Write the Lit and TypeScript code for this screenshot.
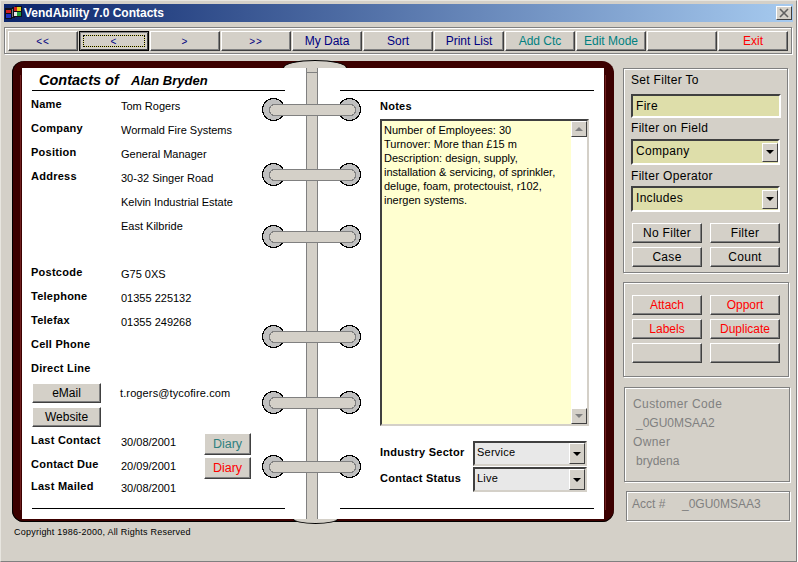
import { LitElement, html, css } from "lit";
import { customElement } from "lit/decorators.js";

const TOOLBAR = [
  { t: "<<", c: "navy small" }, { t: "<", c: "navy small focus" }, { t: ">", c: "navy small" }, { t: ">>", c: "navy small" },
  { t: "My Data", c: "navy" }, { t: "Sort", c: "navy" }, { t: "Print List", c: "navy" },
  { t: "Add Ctc", c: "teal" }, { t: "Edit Mode", c: "teal" }, { t: "", c: "" }, { t: "Exit", c: "red" },
];
const FIELDS = [
  ["Name", "Tom Rogers"], ["Company", "Wormald Fire Systems"], ["Position", "General Manager"],
  ["Address", "30-32 Singer Road"], ["", "Kelvin Industrial Estate"], ["", "East Kilbride"], ["", ""],
  ["Postcode", "G75 0XS"], ["Telephone", "01355 225132"], ["Telefax", "01355 249268"],
  ["Cell Phone", ""], ["Direct Line", ""],
];
const DATES = [["Last Contact", "30/08/2001"], ["Contact Due", "20/09/2001"], ["Last Mailed", "30/08/2001"]];
const RINGS = [110, 175, 237, 337, 403, 467];

@customElement("app-root")
export class AppRoot extends LitElement {
  static styles = css`
    :host { display: block; width: 798px; height: 562px; overflow: hidden; }
    * { box-sizing: border-box; }
    .window {
      position: relative; width: 797px; height: 562px; background: #d4d0c8;
      border: 1px solid; border-color: #e8e6e0 #808080 #808080 #e8e6e0;
      font-family: "Liberation Sans", Arial, sans-serif; font-size: 12px; color: #000;
    }
    .title {
      display: flex; align-items: center; justify-content: space-between;
      height: 18px; margin: 3px 3px 0 3px; padding: 0 1px 0 0;
      background: linear-gradient(90deg, #0a246a, #a6caef); color: #fff;
      font-weight: bold; font-size: 12px;
    }
    .title-left { display: flex; align-items: center; gap: 1px; }
    .close {
      width: 16px; height: 14px; background: #d4d0c8; display: flex; align-items: center; justify-content: center;
      border: 1px solid; border-color: #fff #404040 #404040 #fff;
    }
    .toolbar {
      display: flex; height: 27px; margin: 5px 4px 0 3px; padding: 3px 3px 0 3px;
      border: 1px solid #808080; box-shadow: inset 1px 1px 0 #fff, 1px 1px 0 #fff; gap: 1px;
    }
    .btn {
      display: flex; align-items: center; justify-content: center; background: #d4d0c8;
      border: 1px solid; border-color: #fff #404040 #404040 #fff;
      box-shadow: inset -1px -1px 0 #808080; color: #000; white-space: nowrap;
    }
    .toolbar .btn { width: 70px; height: 20px; }
    .navy { color: #000080; }
    .teal { color: #008080; }
    .red { color: #ff0000; }
    .dim-teal { color: #2f8080; }
    .small { font-size: 10px; letter-spacing: 1px; }
    .toolbar .focus { position: relative; border: 1px solid #000; box-shadow: inset 1px 1px 0 #808080, inset -1px -1px 0 #404040; }
    .focus::after { content: ""; position: absolute; inset: 3px; border: 1px dotted #000; background: transparent; }
    .focus::before { content: ""; position: absolute; inset: 3px; border: 1px solid #e6e070; }

    .main { display: grid; grid-template-columns: 613px 1fr; margin-top: 7px; }
    .binder-col { padding-left: 11px; }
    .binder {
      position: relative; display: flex; width: 602px; height: 461px; padding: 7px 10px 3px 10px;
      background: #3c0000; border-radius: 12px; box-shadow: inset 0 -1px 0 #000, inset 1px 0 0 #000;
    }
    .binder::before {
      content: ""; position: absolute; left: 8px; right: 8px; top: 14px; bottom: 12px;
      border: solid #702020; border-width: 0 1px;
    }
    .page { position: relative; display: flex; flex-direction: column; background: #fff; height: 451px; }
    .page.left { width: 285px; padding: 0 21px 0 10px; border-right: 1px solid #808080; }
    .page.right { width: 287px; padding: 0 10px 0 22px; border-left: 1px solid #808080; }
    .spine { width: 10px; background: #d4d0c8; padding-top: 4px; }
    .spine-mark { height: 1px; background: #808080; }
    .heading { display: flex; align-items: baseline; height: 23px; padding: 4px 0 0 7px; border-bottom: 1px solid #000; font-style: italic; font-weight: bold; }
    .heading .of { font-size: 14.5px; width: 92px; }
    .heading .who { font-size: 13px; }
    .head-blank { height: 23px; border-bottom: 1px solid #000; }
    .fields { margin-top: 1px; }
    .row { display: grid; grid-template-columns: 89px 1fr; height: 24px; align-items: center; }
    .lab { font-weight: bold; font-size: 11px; letter-spacing: 0.25px; margin-left: -1px; white-space: nowrap; }
    .val { font-size: 11px; padding-top: 4px; white-space: nowrap; }
    .mail { display: grid; grid-template-columns: 88px 1fr; margin-top: 3px; }
    .mail-btns { display: flex; flex-direction: column; gap: 4px; }
    .mail-btns .btn { width: 69px; height: 20px; }
    .mail .val { padding: 0; margin-top: 4px; letter-spacing: 0.12px; }
    .dates { display: flex; margin-top: 1px; }
    .date-rows { width: 172px; }
    .date-rows .row:last-child { height: 20px; }
    .diaries { display: flex; flex-direction: column; gap: 2px; padding-top: 5px; }
    .diaries .btn { width: 47px; height: 22px; font-size: 12.5px; }
    .rule { margin-top: auto; margin-bottom: 10px; height: 1px; background: #000; flex: none; }
    .right-body { padding-left: 40px; }
    .notes-lab { font-weight: bold; font-size: 11px; letter-spacing: 0.25px; height: 28px; padding-top: 9px; }
    .notes {
      position: relative; width: 209px; height: 307px; background: #ffffd0;
      border: 2px solid; border-color: #404040 #d4d0c8 #d4d0c8 #404040;
      padding: 2px 20px 0 2px; font-size: 11px; line-height: 14px;
    }
    .scroll { position: absolute; right: 0; top: 0; bottom: 0; width: 16px; background: #fff; display: flex; flex-direction: column; justify-content: space-between; }
    .sb { height: 16px; display: flex; align-items: center; justify-content: center; background: #d4d0c8; border: 1px solid; border-color: #fff #404040 #404040 #fff; }
    .tri-up { width: 0; height: 0; border: 4px solid transparent; border-top: 0; border-bottom: 4px solid #808080; }
    .tri-dn { width: 0; height: 0; border: 4px solid transparent; border-bottom: 0; border-top: 4px solid #808080; }
    .tri-blk { width: 0; height: 0; border: 4px solid transparent; border-bottom: 0; border-top: 4px solid #000; }
    .sel-rows { margin-top: 15px; display: flex; flex-direction: column; gap: 1px; }
    .sel-row { display: flex; align-items: center; }
    .sel-row .lab { width: 93px; margin: 0; padding-bottom: 4px; }
    .select {
      display: flex; align-items: center; justify-content: space-between; height: 25px; width: 114px;
      background: #e8e8e8; border: 2px solid; border-color: #404040 #d4d0c8 #d4d0c8 #404040; padding-left: 2px; font-size: 11px; letter-spacing: 0.25px;
    }
    .select span { padding-bottom: 4px; }
    .arrow { width: 16px; height: 21px; display: flex; align-items: center; justify-content: center; background: #d4d0c8; border: 1px solid; border-color: #fff #404040 #404040 #fff; }
    .copyright { margin: 5px 0 0 2px; font-size: 9px; letter-spacing: 0.23px; }

    .ring { position: absolute; left: 250px; width: 100px; height: 26px; }
    .arc { position: absolute; background: #d4d0c8; border: 1px solid #000; }
    .arc.top { left: 271px; top: -1px; width: 64px; height: 8px; border-bottom: 0; border-radius: 50% 50% 0 0 / 100% 100% 0 0; }
    .arc.bot { left: 281px; top: 458px; width: 45px; height: 5px; border-top: 0; border-radius: 0 0 50% 50% / 0 0 100% 100%; }

    .side { display: flex; flex-direction: column; padding-top: 7px; }
    .panel { border: 1px solid #808080; box-shadow: inset 1px 1px 0 #fff, 1px 1px 0 #fff; flex: none; }
    .p1 { margin-left: 9px; width: 165px; height: 205px; padding: 3px 7px 0 7px; letter-spacing: 0.3px; }
    .p1 .cap { height: 16px; line-height: 16px; }
    .f-input { width: 150px; height: 24px; margin: 6px 0 0 0; background: #dedeaa; border: 2px solid; border-color: #404040 #fff #fff #404040; padding: 3px 0 0 3px; }
    .f-sel { display: flex; justify-content: space-between; align-items: center; width: 149px; height: 26px; background: #dedeaa; border: 2px solid; border-color: #404040 #fff #fff #404040; padding: 0 0 2px 3px; }
    .p1 .f-sel .arrow { margin-top: 2px; height: 19px; }
    .cap.a { margin: 2px 0 3px; }
    .cap.c { margin: 3px 0 2px; }
    .grid2 { display: grid; grid-template-columns: 70px 70px; gap: 4px 8px; }
    .grid2 .btn { height: 20px; }
    .p1 .grid2 { margin: 11px 0 0 1px; }
    .p2 { margin: 9px 0 0 9px; width: 166px; height: 95px; padding: 12px 0 0 8px; }
    .p3 { margin: 10px 0 0 10px; width: 166px; height: 95px; padding: 7px 0 0 8px; color: #808080; letter-spacing: 0.4px; }
    .p3 div { height: 19px; line-height: 19px; }
    .p3 .ind { padding-left: 3px; letter-spacing: 0; }
    .p4 { margin: 9px 0 0 12px; width: 164px; height: 30px; padding: 5px 0 0 5px; color: #808080; display: flex; }
    .p4 span:first-child { width: 50px; }
  `;

  private ring(y: number) {
    return html`<svg class="ring" style="top:${y - 61 - 13}px" viewBox="0 0 100 26" shape-rendering="crispEdges">
      <circle cx="11.5" cy="12.5" r="11" fill="#c0c0c0" stroke="#000"/>
      <circle cx="87.5" cy="12.5" r="11" fill="#c0c0c0" stroke="#000"/>
      <path d="M13.5 7.5H87.5Q93.5 7.5 93.5 13T87.5 18.5H13.5Q7.5 18.5 7.5 13T13.5 7.5Z" fill="#d4d0c8" stroke="#808080"/>
    </svg>`;
  }

  render() {
    return html`<div class="window">
      <div class="title">
        <div class="title-left">
          <svg width="19" height="18" viewBox="0 0 19 18" shape-rendering="crispEdges">
            <path d="M1 4H8V3H11V2H18V13H11V14H8V15H1Z" fill="#101018"/>
            <rect x="2" y="6" width="5" height="3" fill="#d02020"/><rect x="2" y="10" width="5" height="4" fill="#2030c0"/>
            <rect x="8" y="5" width="1" height="8" fill="#808080"/>
            <rect x="10" y="3" width="3" height="4" fill="#d02020"/>
            <rect x="13" y="3" width="4" height="4" fill="#e0d020"/><rect x="13" y="8" width="4" height="4" fill="#20a040"/>
            <rect x="10" y="8" width="3" height="4" fill="#e8e8e8"/>
          </svg>
          <span>VendAbility 7.0 Contacts</span>
        </div>
        <div class="close">
          <svg width="10" height="10" viewBox="0 0 10 10"><path d="M1 1L9 9M9 1L1 9" stroke="#606060" stroke-width="1.6" fill="none"/></svg>
        </div>
      </div>
      <div class="toolbar">
        ${TOOLBAR.map((b) => html`<div class="btn ${b.c}">${b.t}</div>`)}
      </div>
      <div class="main">
        <div class="binder-col">
          <div class="binder">
            <div class="page left">
              <div class="heading"><span class="of">Contacts of</span><span class="who">Alan Bryden</span></div>
              <div class="fields">
                ${FIELDS.map(([l, v]) => html`<div class="row"><div class="lab">${l}</div><div class="val">${v}</div></div>`)}
              </div>
              <div class="mail">
                <div class="mail-btns"><div class="btn">eMail</div><div class="btn">Website</div></div>
                <div class="val">t.rogers@tycofire.com</div>
              </div>
              <div class="dates">
                <div class="date-rows">
                  ${DATES.map(([l, v]) => html`<div class="row"><div class="lab">${l}</div><div class="val">${v}</div></div>`)}
                </div>
                <div class="diaries"><div class="btn dim-teal">Diary</div><div class="btn red">Diary</div></div>
              </div>
              <div class="rule"></div>
            </div>
            <div class="spine"><div class="spine-mark"></div></div>
            <div class="page right">
              <div class="head-blank"></div>
              <div class="right-body">
                <div class="notes-lab">Notes</div>
                <div class="notes">
                  Number of Employees: 30<br />Turnover: More than £15 m<br />Description: design, supply,<br />installation &amp; servicing, of sprinkler,<br />deluge, foam, protectouist, r102,<br />inergen systems.
                  <div class="scroll"><div class="sb"><div class="tri-up"></div></div><div class="sb"><div class="tri-dn"></div></div></div>
                </div>
                <div class="sel-rows">
                  <div class="sel-row"><div class="lab">Industry Sector</div><div class="select"><span>Service</span><div class="arrow"><div class="tri-blk"></div></div></div></div>
                  <div class="sel-row"><div class="lab">Contact Status</div><div class="select"><span>Live</span><div class="arrow"><div class="tri-blk"></div></div></div></div>
                </div>
              </div>
              <div class="rule"></div>
            </div>
            <div class="arc top"></div>
            <div class="arc bot"></div>
            ${RINGS.map((y) => this.ring(y))}
          </div>
          <div class="copyright">Copyright 1986-2000, All Rights Reserved</div>
        </div>
        <div class="side">
          <div class="panel p1">
            <div class="cap">Set Filter To</div>
            <div class="f-input">Fire</div>
            <div class="cap a">Filter on Field</div>
            <div class="f-sel">Company<div class="arrow"><div class="tri-blk"></div></div></div>
            <div class="cap c">Filter Operator</div>
            <div class="f-sel">Includes<div class="arrow"><div class="tri-blk"></div></div></div>
            <div class="grid2">
              <div class="btn">No Filter</div><div class="btn">Filter</div>
              <div class="btn">Case</div><div class="btn">Count</div>
            </div>
          </div>
          <div class="panel p2">
            <div class="grid2">
              <div class="btn red">Attach</div><div class="btn red">Opport</div>
              <div class="btn red">Labels</div><div class="btn red">Duplicate</div>
              <div class="btn"></div><div class="btn"></div>
            </div>
          </div>
          <div class="panel p3">
            <div>Customer Code</div><div class="ind">_0GU0MSAA2</div><div>Owner</div><div class="ind">brydena</div>
          </div>
          <div class="panel p4"><span>Acct #</span><span>_0GU0MSAA3</span></div>
        </div>
      </div>
    </div>`;
  }
}
